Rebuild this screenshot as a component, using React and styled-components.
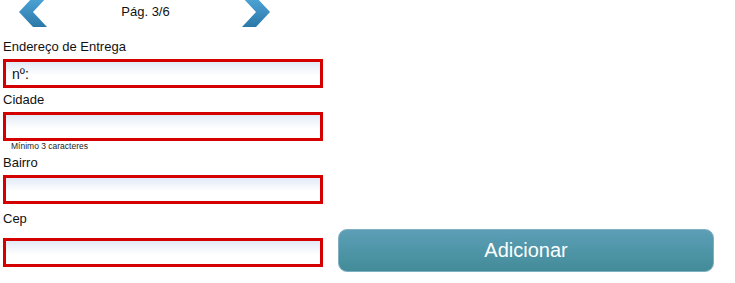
import React from "react";
import styled, { createGlobalStyle } from "styled-components";

const Global = createGlobalStyle`
  html, body { margin: 0; padding: 0; background: #fff; }
  body { font-family: "Liberation Sans", Arial, sans-serif; color: #111; overflow: hidden; }
`;

const Page = styled.div`
  padding-left: 3px;
`;

const Pager = styled.div`
  display: flex;
  align-items: center;
  height: 27px;
  margin-top: -2px;
  padding-left: 16px;
`;

const PageLabel = styled.div`
  width: 195px;
  text-align: center;
  font-size: 13px;
  line-height: 16px;
  padding-left: 2px;
  box-sizing: border-box;
`;

const Arrow = styled.svg`
  display: block;
  width: 28px;
  height: 30px;
  flex: none;
`;

const Label = styled.div`
  font-size: 13px;
  line-height: 16px;
  margin-top: ${(p) => p.$top || 0}px;
  margin-bottom: ${(p) => p.$bottom || 4}px;
`;

const Field = styled.input`
  display: block;
  flex: none;
  box-sizing: border-box;
  width: 320px;
  height: 29px;
  border: 3px solid #d40000;
  outline: none;
  padding: 0 0 0 6px;
  margin: 0;
  font-family: "Liberation Sans", Arial, sans-serif;
  font-size: 14px;
  color: #111;
  background: linear-gradient(to bottom, #e2eaf7 0%, #f4f7fc 35%, #ffffff 60%);
`;

const Hint = styled.div`
  font-size: 8.5px;
  line-height: 11px;
  padding-left: 8px;
  color: #222;
`;

const LastRow = styled.div`
  display: flex;
  align-items: flex-start;
  gap: 15px;
`;

const AddButton = styled.button`
  width: 376px;
  height: 43px;
  margin-top: -9px;
  border: 1px solid #7fb0c2;
  border-radius: 9px;
  background: linear-gradient(to bottom, #5c9fb6 0%, #4f95a8 50%, #438b98 100%);
  color: #fff;
  font-family: "Liberation Sans", Arial, sans-serif;
  font-size: 20px;
  padding: 0;
  cursor: pointer;
`;

const LeftArrow = () => (
  <Arrow viewBox="0 0 28 30">
    <defs>
      <linearGradient id="ag" x1="0" y1="0" x2="0" y2="1">
        <stop offset="0" stopColor="#4fa6d8" />
        <stop offset="1" stopColor="#2a78a8" />
      </linearGradient>
    </defs>
    <polygon points="14,0 28,0 14,15 28,30 14,30 0,15" fill="url(#ag)" />
  </Arrow>
);

const RightArrow = () => (
  <Arrow viewBox="0 0 28 30">
    <defs>
      <linearGradient id="ag2" x1="0" y1="0" x2="0" y2="1">
        <stop offset="0" stopColor="#4fa6d8" />
        <stop offset="1" stopColor="#2a78a8" />
      </linearGradient>
    </defs>
    <polygon points="0,0 14,0 28,15 14,30 0,30 14,15" fill="url(#ag2)" />
  </Arrow>
);

export default function App() {
  return (
    <>
      <Global />
      <Page>
        <Pager>
          <LeftArrow />
          <PageLabel>Pág. 3/6</PageLabel>
          <RightArrow />
        </Pager>
        <Label $top={14}>Endereço de Entrega</Label>
        <Field defaultValue="nº:" />
        <Label $top={4}>Cidade</Label>
        <Field />
        <Hint>Mínimo 3 caracteres</Hint>
        <Label $top={3}>Bairro</Label>
        <Field />
        <Label $top={7} $bottom={11}>Cep</Label>
        <LastRow>
          <Field />
          <AddButton>Adicionar</AddButton>
        </LastRow>
      </Page>
    </>
  );
}
